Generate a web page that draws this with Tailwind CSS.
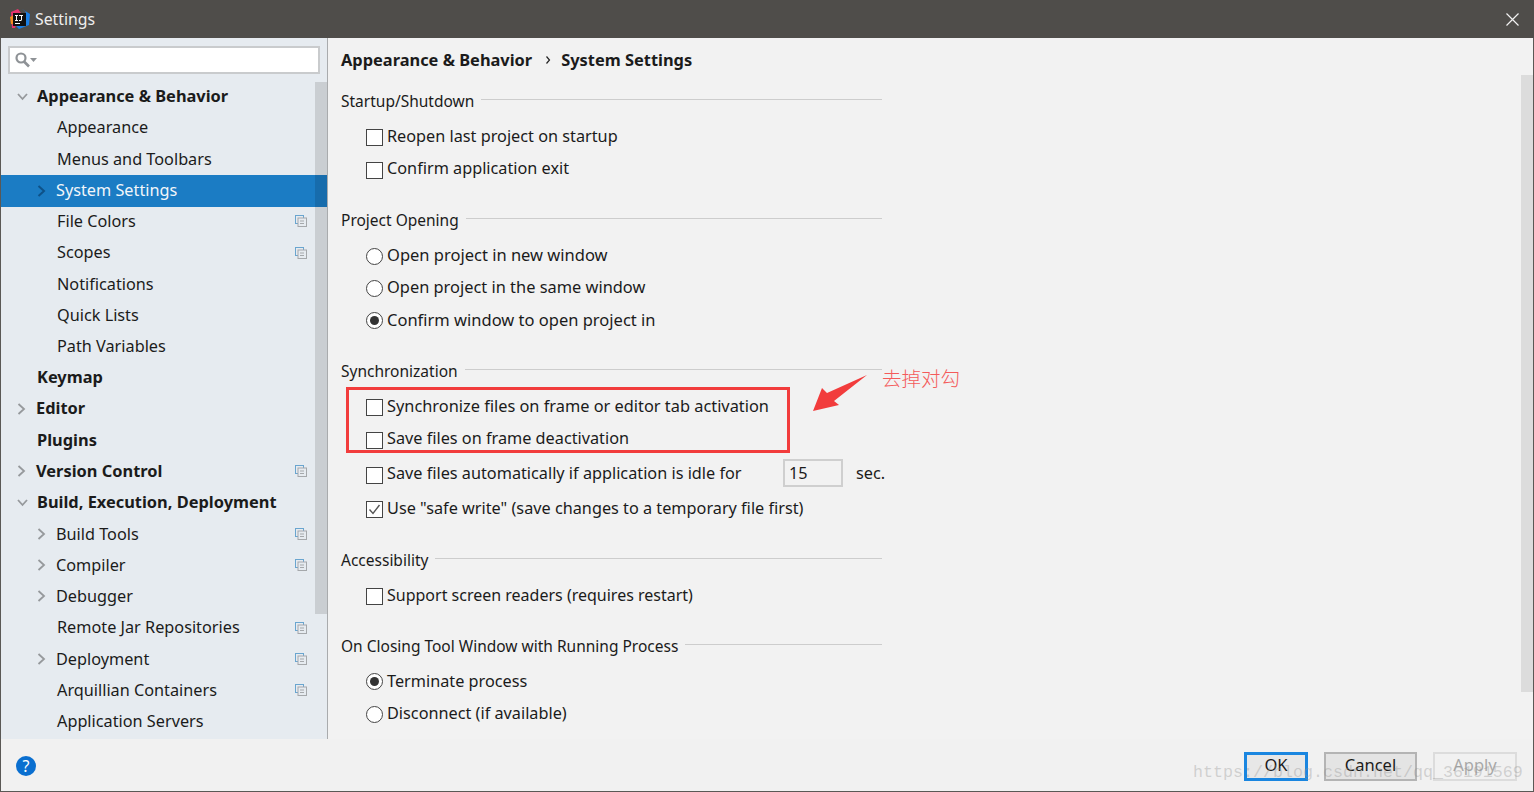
<!DOCTYPE html>
<html lang="en">
<head>
  <meta charset="UTF-8">
  <title>Settings</title>
  <script src="https://cdn.jsdelivr.net/npm/@tailwindcss/browser@4"></script>
</head>
<body class="m-0 overflow-hidden bg-[#f2f2f2]">
  <div class="relative flex h-[792px] w-[1534px] flex-col border border-t-0 border-[#5a5855] font-['Noto_Sans','Noto_Sans_CJK_SC',sans-serif] text-[16.25px] text-[#1b1b1b]">

    <!-- title bar -->
    <div class="-mx-px flex h-[38px] shrink-0 items-center bg-[#4f4d4a] text-[15.8px] text-[#eeeeee]">
      <svg class="ml-[10px] mr-[5px]" width="20" height="20" viewBox="0 0 20 20">
        <path d="M1 3 L8 0 L11 4 L5 19 L2 19 Z" fill="#e8346f"/>
        <path d="M0 8 L4 6 L4 15 L1 15 Z" fill="#f58a1f"/>
        <path d="M12 0 L20 5 L19 16 L9 20 L6 17 L16 3 Z" fill="#1a7fe6"/>
        <rect x="3" y="4" width="13" height="13" fill="#111"/>
        <rect x="5" y="14" width="5" height="1" fill="#fff"/>
        <path d="M5 6h3v1h-1v4h1v1h-3v-1h1v-4h-1z M9 6h4v1h-1v4l-1 1h-2v-1h2v-4h-2z" fill="#fff"/>
      </svg>
      <span class="translate-y-px">Settings</span>
      <svg class="ml-auto mr-[15px]" width="13" height="13" viewBox="0 0 13 13"><path d="M0.5 0.5 L12.5 12.5 M12.5 0.5 L0.5 12.5" stroke="#f2f2f2" stroke-width="1.2"/></svg>
    </div>

    <div class="flex min-h-0 flex-1">
      <!-- sidebar -->
      <div class="relative flex h-[701px] w-[327px] shrink-0 flex-col border-r border-[#a9abad] bg-[#e6ebf0]">
        <div class="ml-[7px] mt-2 flex h-7 w-[312px] items-center border-2 border-[#c9cbcd] bg-white pl-1">
          <svg width="24" height="16" viewBox="0 0 24 16">
            <circle cx="7" cy="6" r="4.5" fill="none" stroke="#8e9296" stroke-width="2.2"/>
            <path d="M10 9.5 L15 14.5" stroke="#8e9296" stroke-width="2.6"/>
            <path d="M16 6h7l-3.5 4z" fill="#8e9296"/>
          </svg>
        </div>

        <div class="mt-[6.65px] flex flex-col">
          <div class="flex h-[31.25px] items-center pl-4 text-[16.4px] font-bold">
            <svg class="mr-[9px]" width="11" height="11" viewBox="0 0 11 11"><path d="M1 3 L5.5 8 L10 3" fill="none" stroke="#96999c" stroke-width="1.8"/></svg>Appearance &amp; Behavior
          </div>
          <div class="flex h-[31.25px] items-center pl-14">Appearance</div>
          <div class="flex h-[31.25px] items-center pl-14">Menus and Toolbars</div>
          <div class="-mb-[1px] mt-[0.25px] flex h-8 items-center bg-[#1b7cc4] pl-9 text-[#f2f6fa]">
            <svg class="mr-[10px]" width="9" height="12" viewBox="0 0 9 12"><path d="M1.5 1 L7 6 L1.5 11" fill="none" stroke="#0e5288" stroke-width="2"/></svg>System Settings
          </div>
          <div class="flex h-[31.25px] items-center pl-14">File Colors
            <svg class="ml-auto mr-[20px]" width="12" height="12" viewBox="0 0 12 12"><rect x="0.5" y="0.5" width="8" height="8" fill="none" stroke="#6aa5cf"/><rect x="3" y="3" width="8.5" height="8.5" fill="#e6ebf0" stroke="#a5a8ab"/><path d="M5 6h4M5 8.5h4" stroke="#a5a8ab"/></svg>
          </div>
          <div class="flex h-[31.25px] items-center pl-14">Scopes
            <svg class="ml-auto mr-[20px]" width="12" height="12" viewBox="0 0 12 12"><rect x="0.5" y="0.5" width="8" height="8" fill="none" stroke="#6aa5cf"/><rect x="3" y="3" width="8.5" height="8.5" fill="#e6ebf0" stroke="#a5a8ab"/><path d="M5 6h4M5 8.5h4" stroke="#a5a8ab"/></svg>
          </div>
          <div class="flex h-[31.25px] items-center pl-14">Notifications</div>
          <div class="flex h-[31.25px] items-center pl-14">Quick Lists</div>
          <div class="flex h-[31.25px] items-center pl-14">Path Variables</div>
          <div class="flex h-[31.25px] items-center pl-9 text-[16.4px] font-bold">Keymap</div>
          <div class="flex h-[31.25px] items-center pl-4 text-[16.4px] font-bold">
            <svg class="mr-[10px]" width="9" height="12" viewBox="0 0 9 12"><path d="M1.5 1 L7 6 L1.5 11" fill="none" stroke="#96999c" stroke-width="1.8"/></svg>Editor
          </div>
          <div class="flex h-[31.25px] items-center pl-9 text-[16.4px] font-bold">Plugins</div>
          <div class="flex h-[31.25px] items-center pl-4 text-[16.4px] font-bold">
            <svg class="mr-[10px]" width="9" height="12" viewBox="0 0 9 12"><path d="M1.5 1 L7 6 L1.5 11" fill="none" stroke="#96999c" stroke-width="1.8"/></svg>Version Control
            <svg class="ml-auto mr-[20px]" width="12" height="12" viewBox="0 0 12 12"><rect x="0.5" y="0.5" width="8" height="8" fill="none" stroke="#6aa5cf"/><rect x="3" y="3" width="8.5" height="8.5" fill="#e6ebf0" stroke="#a5a8ab"/><path d="M5 6h4M5 8.5h4" stroke="#a5a8ab"/></svg>
          </div>
          <div class="flex h-[31.25px] items-center pl-4 text-[16.4px] font-bold">
            <svg class="mr-[9px]" width="11" height="11" viewBox="0 0 11 11"><path d="M1 3 L5.5 8 L10 3" fill="none" stroke="#96999c" stroke-width="1.8"/></svg>Build, Execution, Deployment
          </div>
          <div class="flex h-[31.25px] items-center pl-9">
            <svg class="mr-[10px]" width="9" height="12" viewBox="0 0 9 12"><path d="M1.5 1 L7 6 L1.5 11" fill="none" stroke="#96999c" stroke-width="1.8"/></svg>Build Tools
            <svg class="ml-auto mr-[20px]" width="12" height="12" viewBox="0 0 12 12"><rect x="0.5" y="0.5" width="8" height="8" fill="none" stroke="#6aa5cf"/><rect x="3" y="3" width="8.5" height="8.5" fill="#e6ebf0" stroke="#a5a8ab"/><path d="M5 6h4M5 8.5h4" stroke="#a5a8ab"/></svg>
          </div>
          <div class="flex h-[31.25px] items-center pl-9">
            <svg class="mr-[10px]" width="9" height="12" viewBox="0 0 9 12"><path d="M1.5 1 L7 6 L1.5 11" fill="none" stroke="#96999c" stroke-width="1.8"/></svg>Compiler
            <svg class="ml-auto mr-[20px]" width="12" height="12" viewBox="0 0 12 12"><rect x="0.5" y="0.5" width="8" height="8" fill="none" stroke="#6aa5cf"/><rect x="3" y="3" width="8.5" height="8.5" fill="#e6ebf0" stroke="#a5a8ab"/><path d="M5 6h4M5 8.5h4" stroke="#a5a8ab"/></svg>
          </div>
          <div class="flex h-[31.25px] items-center pl-9">
            <svg class="mr-[10px]" width="9" height="12" viewBox="0 0 9 12"><path d="M1.5 1 L7 6 L1.5 11" fill="none" stroke="#96999c" stroke-width="1.8"/></svg>Debugger
          </div>
          <div class="flex h-[31.25px] items-center pl-14">Remote Jar Repositories
            <svg class="ml-auto mr-[20px]" width="12" height="12" viewBox="0 0 12 12"><rect x="0.5" y="0.5" width="8" height="8" fill="none" stroke="#6aa5cf"/><rect x="3" y="3" width="8.5" height="8.5" fill="#e6ebf0" stroke="#a5a8ab"/><path d="M5 6h4M5 8.5h4" stroke="#a5a8ab"/></svg>
          </div>
          <div class="flex h-[31.25px] items-center pl-9">
            <svg class="mr-[10px]" width="9" height="12" viewBox="0 0 9 12"><path d="M1.5 1 L7 6 L1.5 11" fill="none" stroke="#96999c" stroke-width="1.8"/></svg>Deployment
            <svg class="ml-auto mr-[20px]" width="12" height="12" viewBox="0 0 12 12"><rect x="0.5" y="0.5" width="8" height="8" fill="none" stroke="#6aa5cf"/><rect x="3" y="3" width="8.5" height="8.5" fill="#e6ebf0" stroke="#a5a8ab"/><path d="M5 6h4M5 8.5h4" stroke="#a5a8ab"/></svg>
          </div>
          <div class="flex h-[31.25px] items-center pl-14">Arquillian Containers
            <svg class="ml-auto mr-[20px]" width="12" height="12" viewBox="0 0 12 12"><rect x="0.5" y="0.5" width="8" height="8" fill="none" stroke="#6aa5cf"/><rect x="3" y="3" width="8.5" height="8.5" fill="#e6ebf0" stroke="#a5a8ab"/><path d="M5 6h4M5 8.5h4" stroke="#a5a8ab"/></svg>
          </div>
          <div class="flex h-[31.25px] items-center pl-14">Application Servers</div>
        </div>
        <!-- tree scrollbar -->
        <div class="absolute right-0 top-[44px] h-[532px] w-3 bg-black/12"></div>
      </div>

      <!-- settings panel -->
      <div class="relative flex-1 bg-[#f2f2f2] pl-[13px]">
        <div class="flex h-11 items-center text-[16.4px] font-bold">Appearance &amp; Behavior
          <svg class="ml-3 mr-[9px]" width="8" height="10" viewBox="0 0 8 10"><path d="M2.5 1.5 L5.5 5 L2.5 8.5" fill="none" stroke="#222" stroke-width="1.2"/></svg>System Settings
        </div>

        <div class="mt-[7px] flex h-6 w-[541px] items-center gap-[7px] text-[15.5px]"><span class="translate-y-px">Startup/Shutdown</span><span class="h-px flex-1 -translate-y-[2px] bg-[#cdcdcd]"></span></div>
        <div class="mt-[7px] flex h-8 items-center pl-[25px]"><span class="mr-1 size-[17px] translate-y-px border border-[#444] bg-white"></span>Reopen last project on startup</div>
        <div class="flex h-8 items-center pl-[25px]"><span class="mr-1 size-[17px] translate-y-[2px] border border-[#444] bg-white"></span>Confirm application exit</div>

        <div class="mt-6 flex h-6 w-[541px] items-center gap-[7px] text-[15.5px]"><span class="translate-y-px">Project Opening</span><span class="h-px flex-1 -translate-y-[2px] bg-[#cdcdcd]"></span></div>
        <div class="mt-[7px] flex h-8 items-center pl-[25px] text-[16.5px]"><span class="mr-1 size-[17px] translate-y-px rounded-full border border-[#444] bg-white"></span>Open project in new window</div>
        <div class="flex h-8 items-center pl-[25px] text-[16.4px]"><span class="mr-1 size-[17px] translate-y-px rounded-full border border-[#444] bg-white"></span>Open project in the same window</div>
        <div class="mt-px flex h-8 items-center pl-[25px] text-[16.5px]"><span class="mr-1 flex size-[17px] items-center justify-center rounded-full border border-[#444] bg-white"><span class="size-[9px] rounded-full bg-[#333]"></span></span>Confirm window to open project in</div>

        <div class="mt-[23px] flex h-6 w-[541px] items-center gap-[7px] text-[15.5px]"><span class="translate-y-px">Synchronization</span><span class="h-px flex-1 -translate-y-[2px] bg-[#cdcdcd]"></span></div>
        <div class="mt-[7px] flex h-8 items-center pl-[25px] text-[16.35px]"><span class="mr-1 size-[17px] translate-y-px border border-[#444] bg-white"></span>Synchronize files on frame or editor tab activation</div>
        <div class="flex h-8 items-center pl-[25px]"><span class="mr-1 size-[17px] translate-y-[2px] border border-[#444] bg-white"></span>Save files on frame deactivation</div>
        <div class="mt-[3px] flex h-8 items-center pl-[25px]"><span class="mr-1 size-[17px] translate-y-[2px] border border-[#444] bg-white"></span><span class="w-[396px]">Save files automatically if application is idle for</span>
          <span class="flex h-[28px] w-[60px] items-center border-2 border-[#cfcfcf] bg-[#f2f2f2] pl-[4px]">15</span><span class="ml-[13px]">sec.</span></div>
        <div class="mt-[3px] flex h-8 items-center pl-[25px]"><span class="mr-1 flex size-[17px] translate-y-px items-center justify-center border border-[#444] bg-white"><svg width="13" height="11" viewBox="0 0 13 11"><path d="M1.5 5.5 L5 9.5 L11.5 1" fill="none" stroke="#555" stroke-width="1.4"/></svg></span>Use "safe write" (save changes to a temporary file first)</div>

        <div class="mt-6 flex h-6 w-[541px] items-center gap-[7px] text-[15.5px]"><span class="translate-y-px">Accessibility</span><span class="h-px flex-1 -translate-y-[2px] bg-[#cdcdcd]"></span></div>
        <div class="mt-[7px] flex h-8 items-center pl-[25px] text-[16px]"><span class="mr-1 size-[17px] translate-y-px border border-[#444] bg-white"></span>Support screen readers (requires restart)</div>

        <div class="mt-[23px] flex h-6 w-[541px] items-center gap-[7px] text-[15.5px]"><span class="translate-y-px">On Closing Tool Window with Running Process</span><span class="h-px flex-1 -translate-y-[2px] bg-[#cdcdcd]"></span></div>
        <div class="mt-[7px] flex h-8 items-center pl-[25px]"><span class="mr-1 flex size-[17px] items-center justify-center rounded-full border border-[#444] bg-white"><span class="size-[9px] rounded-full bg-[#333]"></span></span>Terminate process</div>
        <div class="flex h-8 items-center pl-[25px]"><span class="mr-1 size-[17px] translate-y-px rounded-full border border-[#444] bg-white"></span>Disconnect (if available)</div>

        <!-- panel scrollbar -->
        <div class="absolute right-0 top-[37px] h-[617px] w-3 bg-[#dcdcdc]"></div>
      </div>
    </div>

    <!-- footer -->
    <div class="absolute inset-x-0 bottom-0 flex h-[52px] items-center bg-[#f1f1f1] pt-[3px] text-[16.5px]">
      <span class="ml-[15px] flex size-5 -translate-y-px items-center justify-center rounded-full bg-[#0a6fd0] text-[16px] text-white">?</span>
      <div class="ml-auto mr-4 flex items-center">
        <span class="flex h-[29px] w-[64px] items-center justify-center border-[3px] border-[#1a86e0] bg-[#e7e7e7] pb-[2px]">OK</span>
        <span class="ml-4 flex h-[29px] w-[93px] items-center justify-center border-2 border-[#b4b4b4] bg-[#e4e4e4] pb-[2px]">Cancel</span>
        <span class="ml-4 flex h-[29px] w-[84px] items-center justify-center border-2 border-[#dcdcdc] pb-[2px] text-[#a8a8a8]">Apply</span>
      </div>
    </div>

    <!-- annotation over the screenshot -->
    <div class="absolute left-[345px] top-[387px] h-[66px] w-[444px] border-[3px] border-[#f23c3c]"></div>
    <svg class="absolute left-[811px] top-[374px]" width="56" height="38" viewBox="0 0 56 38"><path d="M55 1 L22 27 L27 31 L1 37 L10 14 L15 19 Z" fill="#f23c3c"/></svg>
    <span class="absolute left-[881px] top-[365px] text-[19.5px] font-light leading-7 text-[#f45a5a]">去掉对勾</span>
    <span class="absolute left-[1192px] top-[761px] font-['Liberation_Mono',monospace] text-[16.67px] leading-6 text-[#8f8f8f]/35">https://blog.csdn.net/qq_36191569</span>
  </div>
</body>
</html>
